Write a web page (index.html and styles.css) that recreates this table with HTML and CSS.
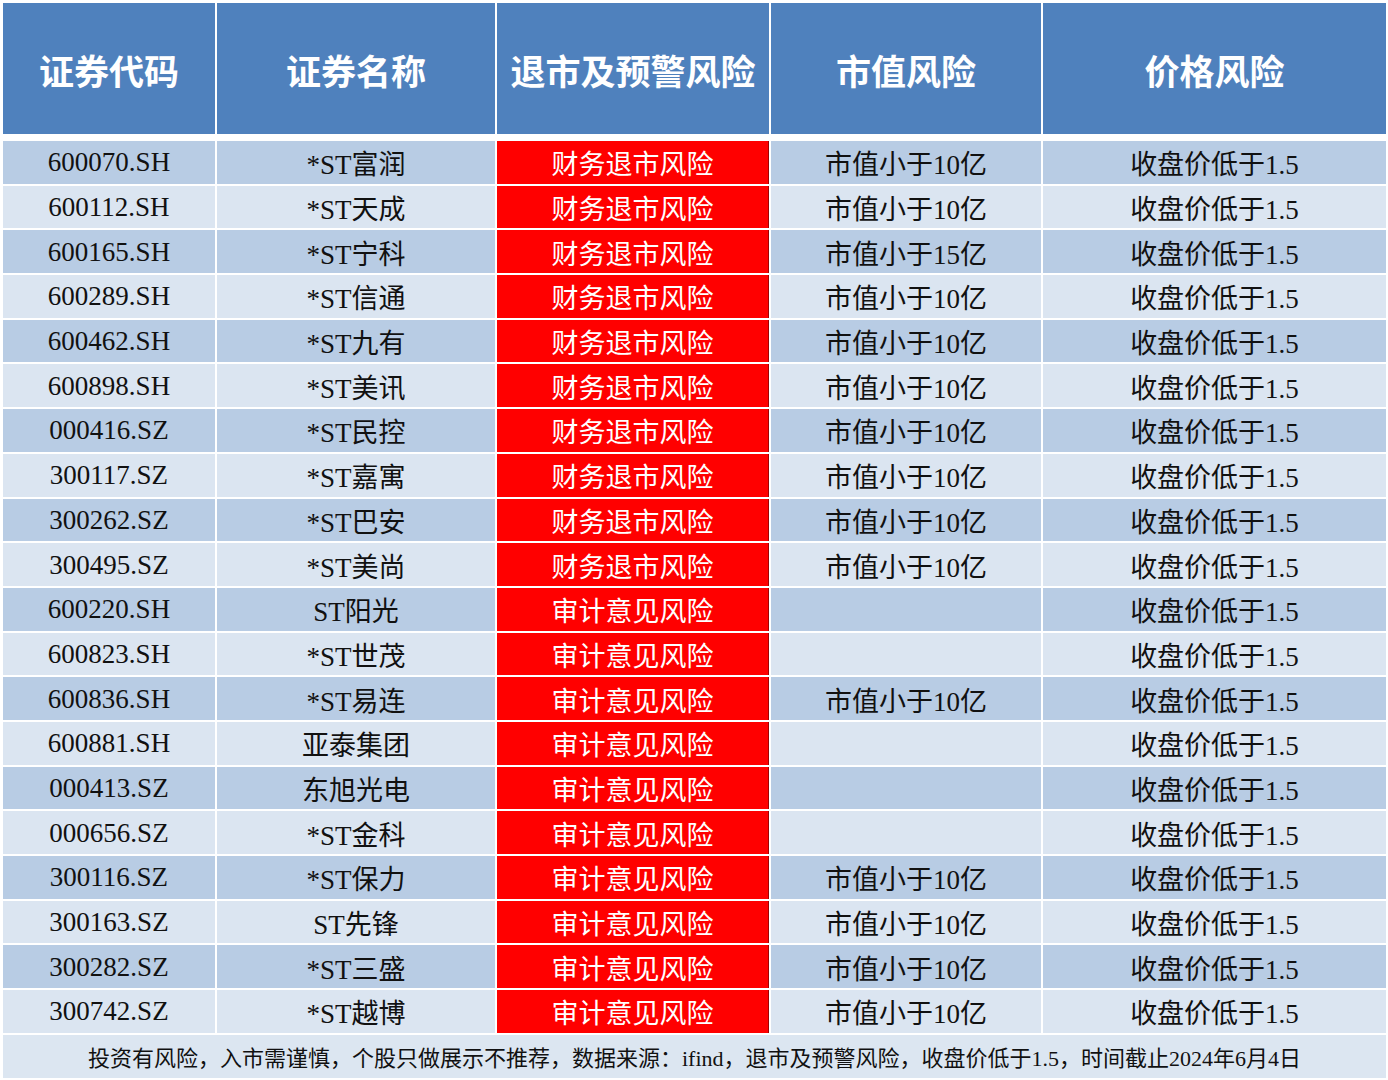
FILE: index.html
```html
<!DOCTYPE html>
<html lang="zh-CN">
<head>
<meta charset="utf-8">
<title>风险股票列表</title>
<link rel="stylesheet" href="styles.css">
</head>
<body>
<div class="sheet">
  <div class="head">
    <div class="hc">证券代码</div>
    <div class="hc">证券名称</div>
    <div class="hc">退市及预警风险</div>
    <div class="hc">市值风险</div>
    <div class="hc">价格风险</div>
  </div>
  <div class="body">
    <div class="c o">600070.SH</div><div class="c o">*ST富润</div><div class="c r">财务退市风险</div><div class="c o">市值小于10亿</div><div class="c o">收盘价低于1.5</div>
    <div class="c e">600112.SH</div><div class="c e">*ST天成</div><div class="c r">财务退市风险</div><div class="c e">市值小于10亿</div><div class="c e">收盘价低于1.5</div>
    <div class="c o">600165.SH</div><div class="c o">*ST宁科</div><div class="c r">财务退市风险</div><div class="c o">市值小于15亿</div><div class="c o">收盘价低于1.5</div>
    <div class="c e">600289.SH</div><div class="c e">*ST信通</div><div class="c r">财务退市风险</div><div class="c e">市值小于10亿</div><div class="c e">收盘价低于1.5</div>
    <div class="c o">600462.SH</div><div class="c o">*ST九有</div><div class="c r">财务退市风险</div><div class="c o">市值小于10亿</div><div class="c o">收盘价低于1.5</div>
    <div class="c e">600898.SH</div><div class="c e">*ST美讯</div><div class="c r">财务退市风险</div><div class="c e">市值小于10亿</div><div class="c e">收盘价低于1.5</div>
    <div class="c o">000416.SZ</div><div class="c o">*ST民控</div><div class="c r">财务退市风险</div><div class="c o">市值小于10亿</div><div class="c o">收盘价低于1.5</div>
    <div class="c e">300117.SZ</div><div class="c e">*ST嘉寓</div><div class="c r">财务退市风险</div><div class="c e">市值小于10亿</div><div class="c e">收盘价低于1.5</div>
    <div class="c o">300262.SZ</div><div class="c o">*ST巴安</div><div class="c r">财务退市风险</div><div class="c o">市值小于10亿</div><div class="c o">收盘价低于1.5</div>
    <div class="c e">300495.SZ</div><div class="c e">*ST美尚</div><div class="c r">财务退市风险</div><div class="c e">市值小于10亿</div><div class="c e">收盘价低于1.5</div>
    <div class="c o">600220.SH</div><div class="c o">ST阳光</div><div class="c r">审计意见风险</div><div class="c o"></div><div class="c o">收盘价低于1.5</div>
    <div class="c e">600823.SH</div><div class="c e">*ST世茂</div><div class="c r">审计意见风险</div><div class="c e"></div><div class="c e">收盘价低于1.5</div>
    <div class="c o">600836.SH</div><div class="c o">*ST易连</div><div class="c r">审计意见风险</div><div class="c o">市值小于10亿</div><div class="c o">收盘价低于1.5</div>
    <div class="c e">600881.SH</div><div class="c e">亚泰集团</div><div class="c r">审计意见风险</div><div class="c e"></div><div class="c e">收盘价低于1.5</div>
    <div class="c o">000413.SZ</div><div class="c o">东旭光电</div><div class="c r">审计意见风险</div><div class="c o"></div><div class="c o">收盘价低于1.5</div>
    <div class="c e">000656.SZ</div><div class="c e">*ST金科</div><div class="c r">审计意见风险</div><div class="c e"></div><div class="c e">收盘价低于1.5</div>
    <div class="c o">300116.SZ</div><div class="c o">*ST保力</div><div class="c r">审计意见风险</div><div class="c o">市值小于10亿</div><div class="c o">收盘价低于1.5</div>
    <div class="c e">300163.SZ</div><div class="c e">ST先锋</div><div class="c r">审计意见风险</div><div class="c e">市值小于10亿</div><div class="c e">收盘价低于1.5</div>
    <div class="c o">300282.SZ</div><div class="c o">*ST三盛</div><div class="c r">审计意见风险</div><div class="c o">市值小于10亿</div><div class="c o">收盘价低于1.5</div>
    <div class="c e">300742.SZ</div><div class="c e">*ST越博</div><div class="c r">审计意见风险</div><div class="c e">市值小于10亿</div><div class="c e">收盘价低于1.5</div>
  </div>
  <div class="foot">投资有风险，入市需谨慎，个股只做展示不推荐，数据来源：ifind，退市及预警风险，收盘价低于1.5，时间截止2024年6月4日</div>
</div>
</body>
</html>
```
FILE: styles.css
```css
* { box-sizing: border-box; }
html, body { margin: 0; padding: 0; background: #ffffff; }
body {
  font-family: "Liberation Serif", "Noto Sans CJK SC", serif;
  color: #111111;
}
.sheet {
  width: 1383px;
  margin: 3px 0 0 3px;
}
.head, .body {
  display: grid;
  grid-template-columns: 212px 278px 272px 270px 343px;
  column-gap: 2px;
}
.head {
  height: 131px;
  margin-bottom: 7px;
}
.hc {
  background: #4f81bd;
  color: #ffffff;
  font-family: "Noto Sans CJK SC", sans-serif;
  font-weight: 700;
  font-size: 35px;
  display: flex;
  align-items: center;
  justify-content: center;
  padding-top: 2px;
}
.body {
  grid-auto-rows: 42.7px;
  row-gap: 2px;
}
.c {
  display: flex;
  align-items: center;
  justify-content: center;
  font-size: 27px;
  padding-top: 1px;
  white-space: nowrap;
}
.o { background: #b8cce4; }
.e { background: #dbe5f1; }
.r {
  background: #ff0000;
  color: #ffffff;
  border-right: 1px solid #a00000;
}
.foot {
  margin-top: 2px;
  height: 43px;
  background: #dce6f1;
  font-size: 22px;
  display: flex;
  align-items: center;
  justify-content: center;
  white-space: nowrap;
}
```
